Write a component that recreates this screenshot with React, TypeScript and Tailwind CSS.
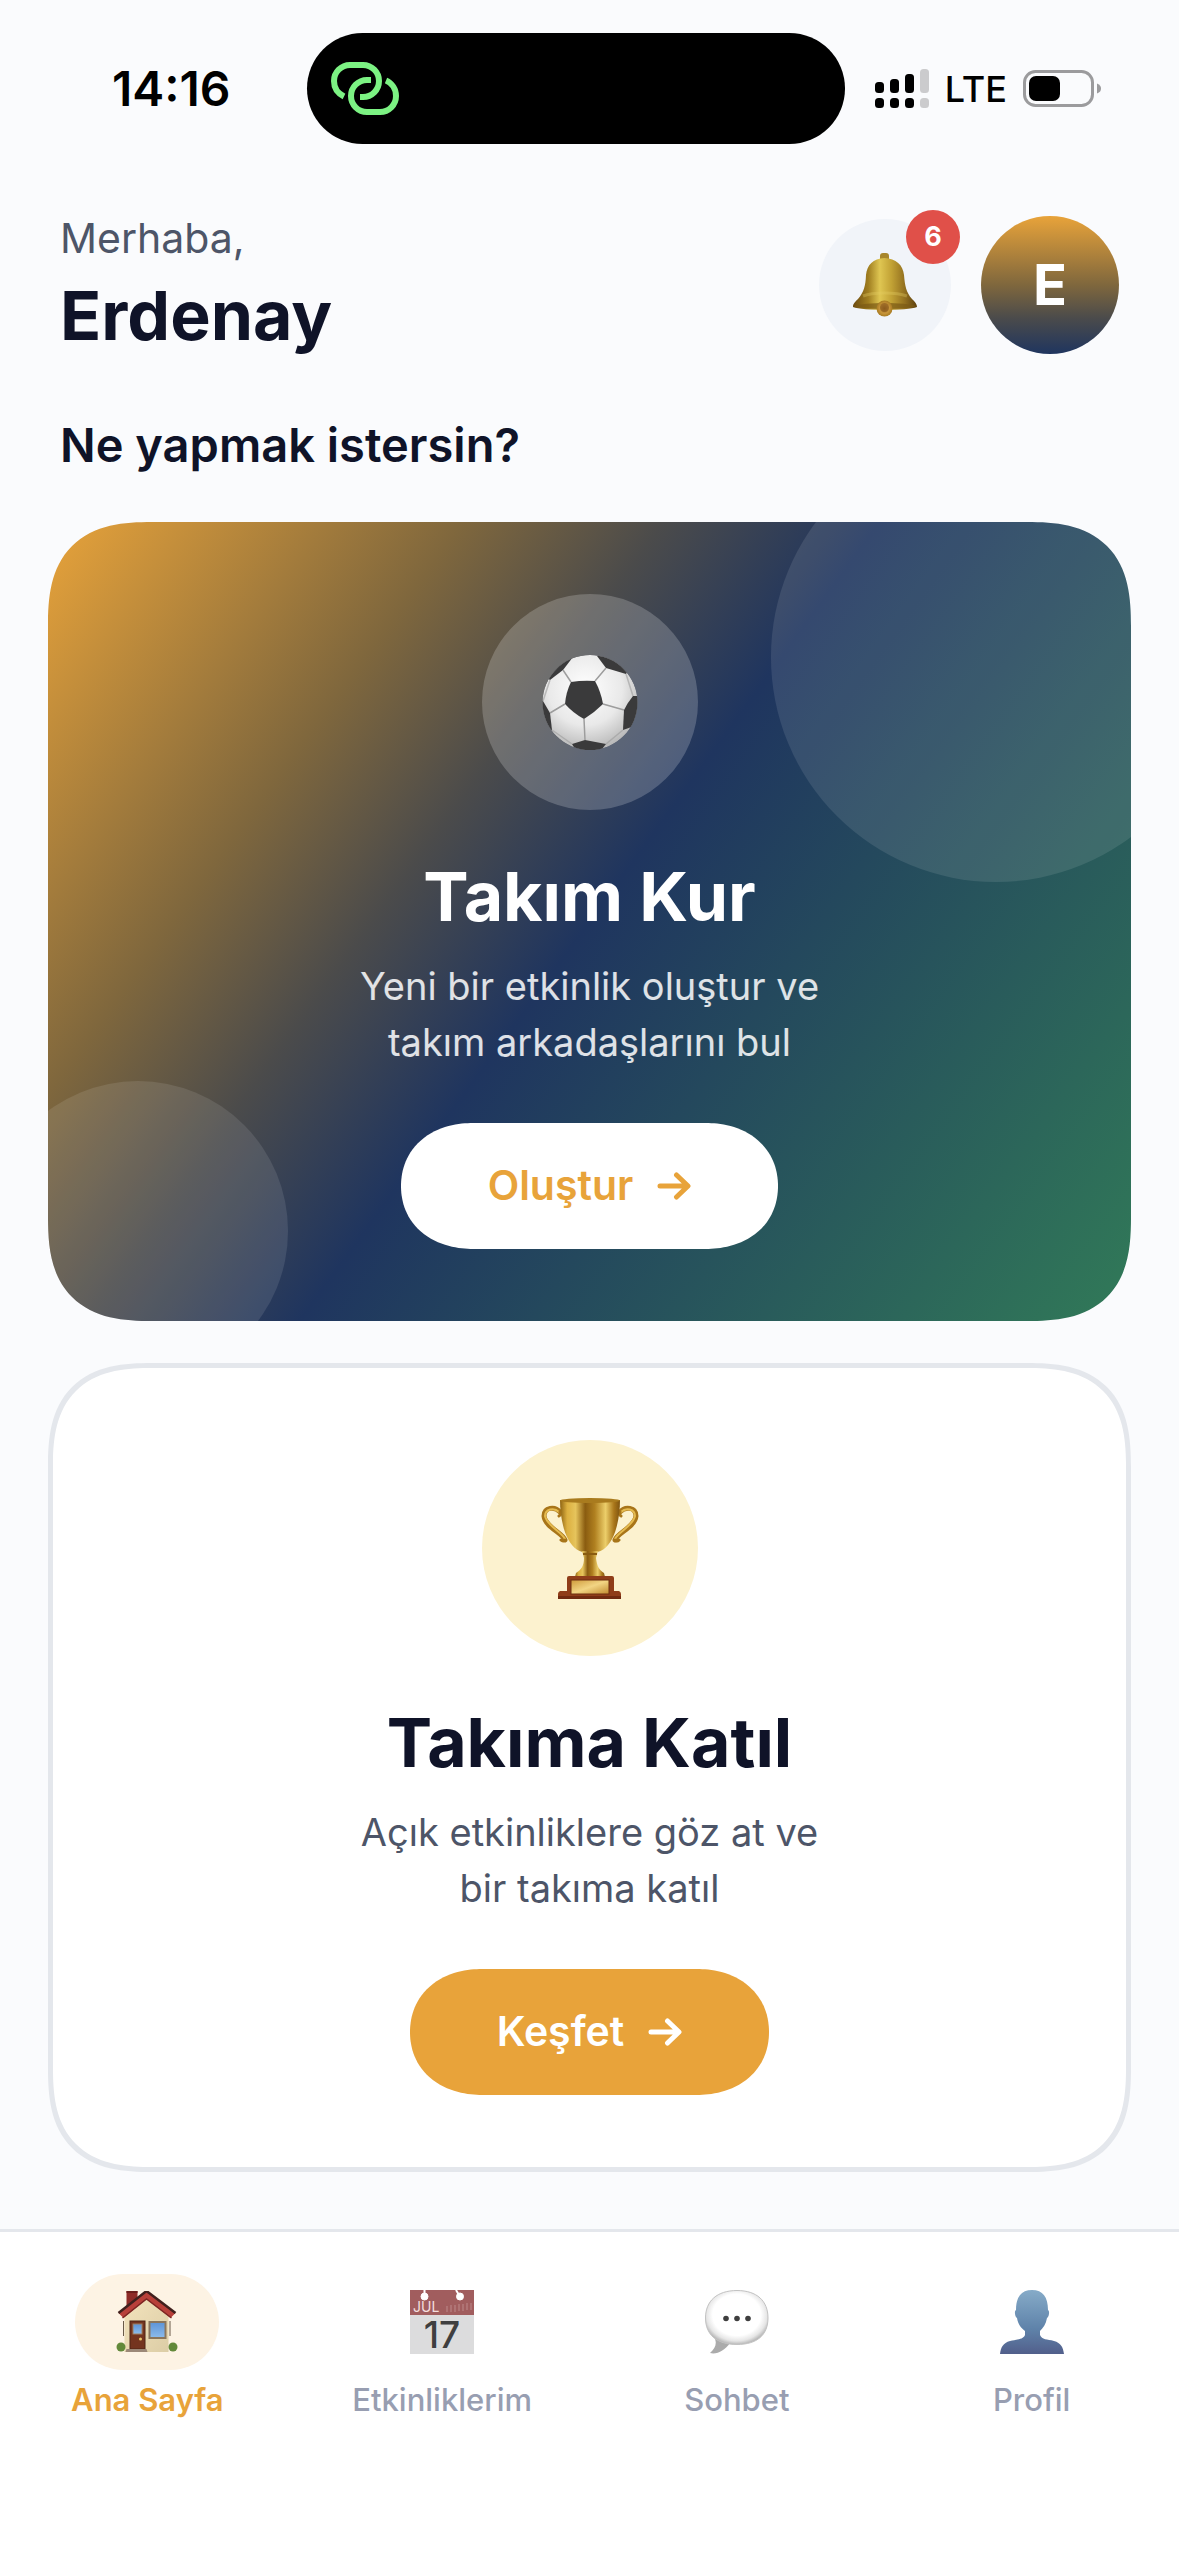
import type { ReactNode } from "react";

// Status bar icons
function LinkIcon() {
    return (
        <svg className="h-[54px] w-[68px]" viewBox="0 0 68 54" fill="none" stroke="#7cf283" strokeWidth="6" aria-hidden="true">
            <path d="M13 34.500C7 31.500 3 26 3 19A16 16 0 0 1 19 3H32A16 16 0 0 1 32 35H29" />
            <path d="M40 18H36A16 16 0 0 0 36 50H49A16 16 0 0 0 65 34C65 27 61 21 55 18.500" />
        </svg>
    );
}

function SignalIcon() {
    return (
        <svg className="h-[39px] w-[54px]" viewBox="0 0 54 39" aria-hidden="true">
            <rect x="0" y="13" width="9" height="11" rx="3.500" />
            <rect x="15" y="10" width="9" height="14" rx="3.500" />
            <rect x="30" y="5" width="9" height="19" rx="3.500" />
            <rect x="45" y="0" width="9" height="24" rx="3.500" fill="#cbcbcd" />
            <rect x="0" y="29" width="9" height="10" rx="3.500" />
            <rect x="15" y="29" width="9" height="10" rx="3.500" />
            <rect x="30" y="29" width="9" height="10" rx="3.500" />
            <rect x="45" y="29" width="9" height="10" rx="3.500" fill="#cbcbcd" />
        </svg>
    );
}

function BatteryIcon() {
    return (
        <svg className="h-[37px] w-[78px]" viewBox="0 0 78 37" aria-hidden="true">
            <rect x="1.500" y="1.500" width="68" height="34" rx="11" fill="none" stroke="#9b9b9d" strokeWidth="3" />
            <rect x="6" y="6" width="31" height="25" rx="7" />
            <path d="M74 13.500c3 1 4 3 4 5s-1 4-4 5z" fill="#9b9b9d" />
        </svg>
    );
}

// Illustrations
function BellIcon() {
    return (
        <svg className="size-16" viewBox="0 0 64 64" aria-hidden="true">
            <defs>
                <linearGradient id="bell" x1="0" x2="1" y1="0" y2="0">
                    <stop offset="0" stopColor="#6b4a10" />
                    <stop offset="0.24" stopColor="#a07e20" />
                    <stop offset="0.42" stopColor="#dfc652" />
                    <stop offset="0.6" stopColor="#c2a235" />
                    <stop offset="0.8" stopColor="#957220" />
                    <stop offset="1" stopColor="#5c3f0e" />
                </linearGradient>
                <radialGradient id="clapper">
                    <stop offset="0" stopColor="#8a5a1a" />
                    <stop offset="0.6" stopColor="#c8953a" />
                    <stop offset="1" stopColor="#a87b22" />
                </radialGradient>
            </defs>
            <rect x="27" y="0" width="9" height="9" rx="3" fill="#a8862c" />
            <path d="M31.500 5C20 5.500 14 12 13 22C12.500 33 11 39 5 46C1 50 0 51 0 54C10 58 54 58 64 54C64 51 62 49 59 46C53 39 52 33 51 22C50 12 43 5.500 31.500 5z" fill="url(#bell)" />
            <path d="M10 43C20 39 43 39 54 43" fill="none" stroke="#e6cf63" strokeWidth="3" opacity="0.35" />
            <path d="M1 53C12 49 52 49 63 53C54 57 10 57 1 53z" fill="#7a5a16" opacity="0.7" />
            <circle cx="31.500" cy="55.500" r="8" fill="url(#clapper)" />
            <circle cx="31.500" cy="54.500" r="4.500" fill="#8d5d20" opacity="0.7" />
        </svg>
    );
}

function BallIcon() {
    return (
        <svg className="size-24" viewBox="0 0 96 96" aria-hidden="true">
            <defs>
                <radialGradient id="ball" cx="0.45" cy="0.35" r="0.65">
                    <stop offset="0" stopColor="#ffffff" />
                    <stop offset="0.6" stopColor="#e9e9e9" />
                    <stop offset="1" stopColor="#b9b9b9" />
                </radialGradient>
                <clipPath id="ballClip"><circle cx="48" cy="48.500" r="47.500" /></clipPath>
            </defs>
            <g clipPath="url(#ballClip)">
                <circle cx="48" cy="48.500" r="47.500" fill="url(#ball)" />
                <g fill="#3a3a3b">
                    <path d="M29 28Q41 26 53 27Q59 38 61 50Q52 59 42 65Q31 59 23 50Q24 38 29 28z" />
                    <path d="M31 3L21 16L8 26L0 20L20 0z" />
                    <path d="M55 2L64 14L84 20L90 10L66 -4z" />
                    <path d="M82 56L81 76L98 70V42H91Q86 48 82 56z" />
                    <path d="M30 90L43 86L64 90L56 100H36z" />
                    <path d="M-2 46L1 47L8 59L10 76L-2 74z" />
                </g>
                <g fill="none" stroke="#9d9d9d" strokeWidth="1.500">
                    <path d="M29 28L21 16M53 27L64 14M61 50L82 56M42 65L43 86M23 50L8 59" />
                    <path d="M84 20L91 42M8 26L1 47M10 76L30 90M64 90L81 76" opacity="0.6" />
                </g>
            </g>
        </svg>
    );
}

function TrophyIcon() {
    return (
        <svg className="h-[101px] w-[98px]" viewBox="0 0 98 101" aria-hidden="true">
            <defs>
                <linearGradient id="cup" x1="0" x2="1" y1="0" y2="0">
                    <stop offset="0" stopColor="#8f6412" />
                    <stop offset="0.12" stopColor="#dcb040" />
                    <stop offset="0.26" stopColor="#e6c45c" />
                    <stop offset="0.42" stopColor="#8a5c10" />
                    <stop offset="0.58" stopColor="#b08020" />
                    <stop offset="0.76" stopColor="#ecce6a" />
                    <stop offset="0.9" stopColor="#a9761a" />
                    <stop offset="1" stopColor="#7e5410" />
                </linearGradient>
                <linearGradient id="plate" x1="0" x2="1" y1="0" y2="1">
                    <stop offset="0" stopColor="#cf9a3a" />
                    <stop offset="0.5" stopColor="#f2d584" />
                    <stop offset="1" stopColor="#c08a2e" />
                </linearGradient>
            </defs>
            <g fill="none" strokeLinecap="round">
                <path d="M19 14C14 8 3 9 3 18C4 29 22 35 24 42M79 14C84 8 95 9 95 18C94 29 76 35 74 42" stroke="#a87519" strokeWidth="5" />
                <path d="M18 14C13 9 4 11 4 18C6 28 21 34 24 41M80 14C85 9 94 11 94 18C92 28 77 34 74 41" stroke="#e5bb50" strokeWidth="2" />
                <path d="M24 42q-2 2-4 0M74 42q2 2 4 0M19 14q1 3-1 4M79 14q-1 3 1 4" stroke="#a87519" strokeWidth="3" />
            </g>
            <path d="M19 2H79C79 16 76 32 71 41C66 50 60 55 49 55S32 50 27 41C22 32 19 16 19 2z" fill="url(#cup)" />
            <ellipse cx="49" cy="2.500" rx="30" ry="2.500" fill="#a97b1e" />
            <path d="M41 53H57L55 60C56 68 58 72 63 75L64 79H34L35 75C40 72 43 68 43 60z" fill="url(#cup)" />
            <path d="M42 56H56" stroke="#8a5c10" strokeWidth="2" />
            <path d="M28 78H71Q73 78 73 80V93H78Q80 94 80 96V101H17V96Q17 94 19 93H26V80Q26 78 28 78z" fill="#8f3d19" />
            <path d="M17 98H80V101H17z" fill="#702a10" />
            <rect x="30" y="82" width="38" height="14" fill="url(#plate)" stroke="#6e2f10" />
        </svg>
    );
}

function ArrowIcon() {
    return (
        <svg className="h-7 w-[34px]" viewBox="0 0 34 28" fill="none" stroke="currentColor" strokeWidth="5" strokeLinecap="round" strokeLinejoin="round" aria-hidden="true">
            <path d="M3 14H30M19.500 3L31 14L19.500 25" />
        </svg>
    );
}

function HouseIcon() {
    return (
        <svg className="size-[62px]" viewBox="0 0 61 62" aria-hidden="true">
            <defs>
                <linearGradient id="wall" x1="0" x2="1" y1="0" y2="1">
                    <stop offset="0" stopColor="#f4e4bd" />
                    <stop offset="1" stopColor="#dccda6" />
                </linearGradient>
                <linearGradient id="glass" x1="0" x2="0" y1="0" y2="1">
                    <stop offset="0" stopColor="#5c93d6" />
                    <stop offset="1" stopColor="#8dbcec" />
                </linearGradient>
            </defs>
            <rect x="10" y="0" width="11" height="18" fill="#8e2b27" />
            <path d="M10 0H21V2H10z" fill="#6b1f1c" />
            <path d="M8 22L30 4L52 22V61H8z" fill="url(#wall)" />
            <path d="M2 22L30 0L59 22L54 27L30 8L7 27z" fill="#b8403a" />
            <path d="M2 22L30 0L59 22" fill="none" stroke="#40201d" strokeWidth="2.500" />
            <path d="M6 27L30 8L55 27" fill="none" stroke="#7d2623" strokeWidth="1.500" />
            <path d="M7 30V45M53.500 30V45" stroke="#6a5a48" />
            <rect x="13.500" y="30" width="15" height="28" fill="#74341f" stroke="#4f2414" />
            <rect x="16.500" y="33" width="9" height="10" fill="url(#glass)" stroke="#a08060" />
            <circle cx="24" cy="48" r="1.500" fill="#e8c46a" />
            <rect x="33" y="31" width="16" height="16" fill="url(#glass)" stroke="#8b765c" strokeWidth="2" />
            <circle cx="4.500" cy="56" r="4.500" fill="#62893a" />
            <circle cx="56.500" cy="56" r="4.500" fill="#62893a" />
            <path d="M10 58H30L31 61H9z" fill="#9c8878" />
        </svg>
    );
}

function CalendarIcon() {
    return (
        <svg className="size-16 overflow-visible" viewBox="0 0 64 64" aria-hidden="true">
            <rect width="64" height="64" fill="#dcdcdd" />
            <rect width="64" height="25" fill="#a15d5e" />
            <g fill="#fff" stroke="#fff">
                <circle cx="14.500" cy="6.500" r="3.500" />
                <circle cx="50" cy="6.500" r="3.500" />
                <path d="M14.500 0V6M46 0L49 5" strokeWidth="2" />
            </g>
            <text x="3" y="22" fontFamily="Inter, sans-serif" fontSize="14" fill="#f3dede">JUL</text>
            <path d="M37 16V22M41 15V22M45 15V22M49 14V21M53 14V21M57 13V20M61 13V20" stroke="#bd8a8a" />
            <text x="32" y="58" textAnchor="middle" fontFamily="Inter, sans-serif" fontSize="37" fontWeight="500" fill="#3f3f40">17</text>
        </svg>
    );
}

function ChatIcon() {
    return (
        <svg className="size-16" viewBox="0 0 64 64" aria-hidden="true">
            <defs>
                <radialGradient id="bubble" cx="0.5" cy="0.45" r="0.55">
                    <stop offset="0.7" stopColor="#ffffff" />
                    <stop offset="0.88" stopColor="#e6e6e6" />
                    <stop offset="1" stopColor="#b9b9b9" />
                </radialGradient>
            </defs>
            <path d="M10 49C12 54 10 59 5 63C12 65 20 60 25 53z" fill="#ababab" />
            <path d="M32 0.500C52 0.500 63 11 63 28C63 45 52 54.500 32 54.500C12 54.500 0.500 45 0.500 28C0.500 11 12 0.500 32 0.500z" fill="url(#bubble)" stroke="#c2c2c2" />
            <g fill="#3f3f3f">
                <circle cx="21" cy="28.500" r="2.800" />
                <circle cx="32" cy="28.500" r="2.800" />
                <circle cx="43" cy="28.500" r="2.800" />
            </g>
        </svg>
    );
}

function PersonIcon() {
    return (
        <svg className="size-16" viewBox="0 0 64 64" aria-hidden="true">
            <defs>
                <linearGradient id="person" x1="0" x2="0" y1="0" y2="1">
                    <stop offset="0" stopColor="#86abc8" />
                    <stop offset="0.6" stopColor="#5f83aa" />
                    <stop offset="1" stopColor="#525f8b" />
                </linearGradient>
            </defs>
            <path d="M32 0C43 0 48 7 48 20C50 21 49 27 47 28C46 34 43 38 40 41V45C42 50 47 49 54 51C61 53 63 57 64 64H0C1 57 3 53 10 51C17 49 23 50 25 45V41C21 38 18 34 17 28C15 27 14 21 16 20C16 7 21 0 32 0z" fill="url(#person)" />
        </svg>
    );
}

type ActionCardProps = {
    icon: ReactNode;
    title: string;
    lines: [string, string];
    action: string;
    featured?: boolean;
};

function ActionCard({ icon, title, lines, action, featured }: ActionCardProps) {
    return (
        <section
            className={`relative flex flex-col items-center overflow-hidden rounded-[84px] py-[72px] text-center supports-[corner-shape:squircle]:rounded-[104px] [corner-shape:superellipse(1.4)] ${featured
                ? "bg-[linear-gradient(126deg,#e8a33a,#7f673d_25%,#4b4b4b_37%,#1f355f_50%,#317a58)]"
                : "border-5 border-[#e4e7ec] bg-white"
            }`}
        >
            {/* Background circles */}
            {featured && (
                <>
                    <div className="absolute -top-[90px] -right-[90px] size-[450px] rounded-full bg-white/10" />
                    <div className="absolute -bottom-[60px] -left-[60px] size-[300px] rounded-full bg-white/10" />
                </>
            )}

            <div className={`flex size-[216px] items-center justify-center rounded-full ${featured ? "bg-white/20" : "bg-[#fcf2cf]"}`}>
                {icon}
            </div>
            <h3 className={`mt-11 text-[68px] leading-[84px] font-bold ${featured ? "text-white" : "text-[#0f1328]"}`}>
                {title}
            </h3>
            <p className={`mt-5 text-[38px] leading-[56px] ${featured ? "text-white/85" : "text-[#4d5568]"}`}>
                {lines[0]}
                <br />
                {lines[1]}
            </p>
            <button
                type="button"
                className={`relative mt-[53px] flex h-[126px] items-center gap-6 rounded-full px-[87px] text-[41px] font-semibold supports-[corner-shape:squircle]:rounded-[72px/63px] [corner-shape:superellipse(1.1)] ${featured
                    ? "bg-white text-[#e8a33a]"
                    : "bg-[#e8a33a] text-white"
                }`}
            >
                {action}
                <ArrowIcon />
            </button>
        </section>
    );
}

const tabs = [
    { label: "Ana Sayfa", icon: <HouseIcon />, active: true },
    { label: "Etkinliklerim", icon: <CalendarIcon />, active: false },
    { label: "Sohbet", icon: <ChatIcon />, active: false },
    { label: "Profil", icon: <PersonIcon />, active: false },
];

export default function App() {
    return (
        <div className="flex min-h-screen flex-col bg-[#fafbfd] font-['Inter',sans-serif] text-[#0f1328]">

            {/* Status bar */}
            <div className="flex items-center pt-[33px] pr-[78px] pl-28 text-black">
                <span className="text-[48px] leading-[60px] font-semibold">14:16</span>
                <div className="ml-auto flex h-[111px] w-[538px] items-center rounded-full bg-black pl-6">
                    <LinkIcon />
                </div>
                <div className="ml-[30px] flex items-center gap-4">
                    <SignalIcon />
                    <span className="text-[36px] leading-[48px] font-medium">LTE</span>
                    <BatteryIcon />
                </div>
            </div>

            {/* Greeting */}
            <header className="flex items-center justify-between px-[60px] pt-[67px]">
                <div className="pb-[2px]">
                    <p className="text-[41px] leading-[54px] text-[#4d5568]">Merhaba,</p>
                    <h1 className="mt-2 text-[68px] leading-[84px] font-bold">Erdenay</h1>
                </div>
                <div className="flex items-center gap-[30px]">
                    <button type="button" aria-label="Bildirimler" className="relative flex size-[132px] items-center justify-center rounded-full bg-[#f1f4f9]">
                        <BellIcon />
                        <span className="absolute -top-[9px] -right-[9px] flex size-[54px] items-center justify-center rounded-full bg-[#e05049] text-[27px] font-bold text-white">
                            6
                        </span>
                    </button>
                    <button type="button" className="flex size-[138px] items-center justify-center rounded-full bg-[linear-gradient(#e8a33a,#7f673d_50%,#4b4b4b_74%,#1f355f)] text-[56px] font-bold text-white">
                        E
                    </button>
                </div>
            </header>

            {/* Actions */}
            <main className="px-12 pt-[56px] pb-[56px]">
                <h2 className="px-3 text-[47px] leading-[60px] font-semibold">Ne yapmak istersin?</h2>
                <div className="mt-[47px] flex flex-col gap-[42px]">
                    <ActionCard
                        featured
                        icon={<BallIcon />}
                        title="Takım Kur"
                        lines={["Yeni bir etkinlik oluştur ve", "takım arkadaşlarını bul"]}
                        action="Oluştur"
                    />
                    <ActionCard
                        icon={<TrophyIcon />}
                        title="Takıma Katıl"
                        lines={["Açık etkinliklere göz at ve", "bir takıma katıl"]}
                        action="Keşfet"
                    />
                </div>
            </main>

            {/* Tab bar */}
            <nav className="mt-auto grid grid-cols-4 border-t-3 border-[#e4e7ec] bg-white pt-[42px] pb-[138px]">
                {tabs.map((tab) => (
                    <a key={tab.label} href="#" className="flex flex-col items-center gap-3">
                        <span className={`flex h-24 w-36 items-center justify-center rounded-full ${tab.active ? "bg-[#fdf3e4]" : ""}`}>
                            {tab.icon}
                        </span>
                        <span className={`text-[31px] leading-9 ${tab.active ? "font-semibold text-[#e8a33a]" : "font-medium text-[#989eb1]"}`}>
                            {tab.label}
                        </span>
                    </a>
                ))}
            </nav>
        </div>
    );
}
